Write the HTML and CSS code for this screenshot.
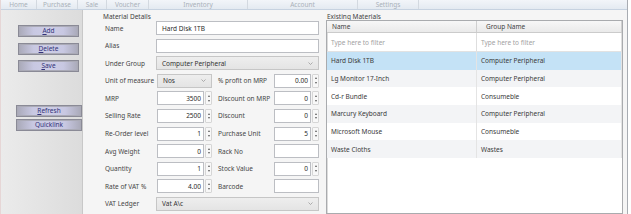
FILE: index.html
```html
<!DOCTYPE html>
<html>
<head>
<meta charset="utf-8">
<title>Material Master</title>
<link rel="stylesheet" href="styles.css">
</head>
<body>
<div class="window">
  <nav class="menubar">
    <span class="menu-item m-home">Home</span>
    <span class="menu-item m-purchase">Purchase</span>
    <span class="menu-item m-sale">Sale</span>
    <span class="menu-item m-voucher">Voucher</span>
    <span class="menu-item m-inventory">Inventory</span>
    <span class="menu-item m-account">Account</span>
    <span class="menu-item m-settings">Settings</span>
  </nav>
  <div class="content">
    <aside class="sidebar">
      <div class="btn-stack">
        <button class="btn"><u>A</u>dd</button>
        <button class="btn"><u>D</u>elete</button>
        <button class="btn"><u>S</u>ave</button>
      </div>
      <div class="btn-stack2">
        <button class="btn btn-wide"><u>R</u>efresh</button>
        <button class="btn btn-wide">Quicklink</button>
      </div>
    </aside>

    <section class="details">
      <div class="group-title">Material Details</div>
      <div class="form">
        <span class="lbl">Name</span>
        <div class="textbox full">Hard Disk 1TB</div>

        <span class="lbl">Alias</span>
        <div class="textbox full"></div>

        <span class="lbl">Under Group</span>
        <div class="combo full"><span>Computer Peripheral</span><svg class="chev" width="5" height="3" viewBox="0 0 5 3"><polyline points="0.5,0.5 2.5,2.5 4.5,0.5" fill="none" stroke="#9a9a9a" stroke-width="0.8"/></svg></div>

        <span class="lbl">Unit of measure</span>
        <div class="combo c1"><span>Nos</span><svg class="chev" width="5" height="3" viewBox="0 0 5 3"><polyline points="0.5,0.5 2.5,2.5 4.5,0.5" fill="none" stroke="#9a9a9a" stroke-width="0.8"/></svg></div>
        <span class="lbl lbl2">% profit on MRP</span>
        <div class="spin c2"><span class="spin-val">0.00</span><span class="spin-btns"><i class="up"></i><i class="down"></i></span></div>

        <span class="lbl">MRP</span>
        <div class="spin c1"><span class="spin-val">3500</span><span class="spin-btns"><i class="up"></i><i class="down"></i></span></div>
        <span class="lbl lbl2">Discount on MRP</span>
        <div class="spin c2"><span class="spin-val">0</span><span class="spin-btns"><i class="up"></i><i class="down"></i></span></div>

        <span class="lbl">Selling Rate</span>
        <div class="spin c1"><span class="spin-val">2500</span><span class="spin-btns"><i class="up"></i><i class="down"></i></span></div>
        <span class="lbl lbl2">Discount</span>
        <div class="spin c2"><span class="spin-val">0</span><span class="spin-btns"><i class="up"></i><i class="down"></i></span></div>

        <span class="lbl">Re-Order level</span>
        <div class="spin c1"><span class="spin-val">1</span><span class="spin-btns"><i class="up"></i><i class="down"></i></span></div>
        <span class="lbl lbl2">Purchase Unit</span>
        <div class="spin c2"><span class="spin-val">5</span><span class="spin-btns"><i class="up"></i><i class="down"></i></span></div>

        <span class="lbl">Avg Weight</span>
        <div class="spin c1"><span class="spin-val">0</span><span class="spin-btns"><i class="up"></i><i class="down"></i></span></div>
        <span class="lbl lbl2">Rack No</span>
        <div class="textbox c2"></div>

        <span class="lbl">Quantity</span>
        <div class="spin c1"><span class="spin-val">1</span><span class="spin-btns"><i class="up"></i><i class="down"></i></span></div>
        <span class="lbl lbl2">Stock Value</span>
        <div class="spin c2"><span class="spin-val">0</span><span class="spin-btns"><i class="up"></i><i class="down"></i></span></div>

        <span class="lbl">Rate of VAT %</span>
        <div class="spin c1"><span class="spin-val">4.00</span><span class="spin-btns"><i class="up"></i><i class="down"></i></span></div>
        <span class="lbl lbl2">Barcode</span>
        <div class="textbox c2"></div>

        <span class="lbl">VAT Ledger</span>
        <div class="combo full"><span>Vat A\c</span><svg class="chev" width="5" height="3" viewBox="0 0 5 3"><polyline points="0.5,0.5 2.5,2.5 4.5,0.5" fill="none" stroke="#9a9a9a" stroke-width="0.8"/></svg></div>
      </div>
    </section>

    <section class="materials">
      <div class="group-title gt-right">Existing Materials</div>
      <div class="grid">
        <div class="grid-head">
          <div class="cell c-name">Name</div>
          <div class="cell c-group head-group">Group Name</div>
        </div>
        <div class="grid-filter">
          <div class="cell c-name ph">Type here to filter</div>
          <div class="cell c-group ph">Type here to filter</div>
        </div>
        <div class="grid-row selected">
          <div class="cell c-name">Hard Disk 1TB</div>
          <div class="cell c-group">Computer Peripheral</div>
        </div>
        <div class="grid-row alt">
          <div class="cell c-name">Lg Monitor 17-Inch</div>
          <div class="cell c-group">Computer Peripheral</div>
        </div>
        <div class="grid-row">
          <div class="cell c-name">Cd-r Bundle</div>
          <div class="cell c-group">Consumeble</div>
        </div>
        <div class="grid-row alt">
          <div class="cell c-name">Marcury Keyboard</div>
          <div class="cell c-group">Computer Peripheral</div>
        </div>
        <div class="grid-row">
          <div class="cell c-name">Microsoft Mouse</div>
          <div class="cell c-group">Consumeble</div>
        </div>
        <div class="grid-row alt">
          <div class="cell c-name">Waste Cloths</div>
          <div class="cell c-group">Wastes</div>
        </div>
      </div>
    </section>
  </div>
</div>
</body>
</html>
```

FILE: styles.css
```css
* { box-sizing: border-box; }

html, body {
  margin: 0;
  padding: 0;
  background: #ffffff;
}

body {
  width: 631px;
  height: 214px;
  overflow: hidden;
  font-family: "Noto Sans", "Open Sans", sans-serif;
  font-size: 6.5px;
  color: #474747;
}

.window {
  width: 628px;
  height: 214px;
  display: flex;
  flex-direction: column;
  border-right: 1px solid #a8acb2;
  border-left: 1px solid #e6d6d6;
  background: #f5f5f5;
}

/* ---------- menu bar ---------- */
.menubar {
  height: 10px;
  flex: none;
  display: flex;
  background: linear-gradient(#f2f5f9, #e4eaf1);
  border-bottom: 1px solid #c6d2e0;
  color: #aab1b9;
  line-height: 7px;
  overflow: hidden;
}

.menu-item {
  display: flex;
  justify-content: center;
  align-items: flex-start;
  padding-top: 1px;
  border-right: 1px solid #d3d9e0;
  height: 9px;
}

.m-home { width: 36px; }
.m-purchase { width: 41px; }
.m-sale { width: 29px; }
.m-voucher { width: 42px; }
.m-inventory { width: 99px; }
.m-account { width: 110px; }
.m-settings { width: 61px; }

/* ---------- layout ---------- */
.content {
  flex: 1;
  display: flex;
  min-height: 0;
}

.sidebar {
  width: 82px;
  flex: none;
  background: linear-gradient(to right, #ebebeb, #dcdcdc);
  border-right: 1px solid #c8c8c8;
  display: flex;
  flex-direction: column;
  padding-top: 15px;
}

.btn-stack {
  display: flex;
  flex-direction: column;
  gap: 5.5px;
  padding-left: 17px;
}

.btn-stack2 {
  display: flex;
  flex-direction: column;
  gap: 2px;
  padding-left: 15px;
  margin-top: 33px;
}

.btn {
  width: 61px;
  height: 12px;
  padding: 0;
  margin: 0;
  font-family: inherit;
  font-size: 6.5px;
  line-height: 10px;
  color: #33337a;
  border: 1px solid #8a8a96;
  box-shadow: inset 0 0 0 1px #aaaab6;
  background: linear-gradient(to right, #a9a9b8 0%, #c8c8e2 25%, #cdcde6 50%, #c8c8e2 75%, #a9a9b8 100%);
}

.btn u { text-decoration-thickness: 0.5px; text-underline-offset: 1px; }

.btn-wide { width: 66px; }

/* ---------- material details ---------- */
.details {
  width: 240px;
  flex: none;
  padding-left: 20px;
}

.group-title {
  height: 11px;
  line-height: 11px;
  padding-top: 1px;
  color: #3f3f3f;
}

.form {
  padding-left: 2px;
  display: grid;
  grid-template-columns: 51px 57px 61px 45px;
  grid-auto-rows: 14px;
  row-gap: 3.6px;
}

.lbl {
  display: flex;
  align-items: center;
  white-space: nowrap;
  color: #464646;
}

.lbl2 { padding-left: 5px; }

.full { grid-column: 2 / 5; }
.c1 { grid-column: 2; margin-right: 1px; margin-left: 1px; }
.c2 { grid-column: 4; }

.textbox {
  background: #ffffff;
  border: 1px solid #bcbec3;
  display: flex;
  align-items: center;
  padding-left: 5px;
  color: #2a2a2a;
}

.combo {
  background: linear-gradient(#eeeeee, #e4e4e4);
  border: 1px solid #c6c6c6;
  display: flex;
  align-items: center;
  justify-content: space-between;
  padding-left: 5px;
  padding-right: 5px;
  color: #333;
}

.chev { flex: none; }

.spin {
  display: flex;
  gap: 1px;
}

.spin-val {
  flex: 1;
  background: #ffffff;
  border: 1px solid #bcbec3;
  display: flex;
  align-items: center;
  justify-content: flex-end;
  padding-right: 2px;
  color: #2a2a2a;
}

.spin-btns {
  width: 7px;
  flex: none;
  display: flex;
  flex-direction: column;
  justify-content: space-evenly;
  align-items: center;
  border: 1px solid #d6d6d6;
  border-radius: 1px;
  background: #f8f8f8;
}

.spin-btns i {
  display: block;
  width: 0;
  height: 0;
  border-left: 1.5px solid transparent;
  border-right: 1.5px solid transparent;
}

.spin-btns .up { border-bottom: 2px solid #5a5a5a; }
.spin-btns .down { border-top: 2px solid #5a5a5a; }

/* ---------- existing materials ---------- */
.materials {
  flex: 1;
  display: flex;
  flex-direction: column;
  padding-left: 3px;
  padding-right: 4px;
}

.gt-right { padding-left: 1px; height: 10px; }

.grid {
  flex: 1;
  background: #ffffff;
  border: 1px solid #a9abae;
  box-shadow: inset 1px 0 0 #dcdcdc;
  display: flex;
  flex-direction: column;
}

.cell {
  display: flex;
  align-items: center;
  white-space: nowrap;
  padding-left: 4px;
  color: #3a3a3a;
}

.grid-head {
  display: flex;
  height: 12px;
  flex: none;
  background: linear-gradient(#f7f7f7, #eaeaea);
  border-bottom: 1px solid #cbcbcb;
}

.grid-head .cell { border-right: 1px solid #cfcfcf; padding-left: 5px; color: #444; }
.grid-head .head-group { padding-left: 9px; }

.grid-filter {
  display: flex;
  height: 19px;
  flex: none;
  border-bottom: 1px solid #e2e2e2;
}

.grid-filter .cell { border-right: 1px solid #dedede; padding-left: 4px; }

.grid-filter .ph { color: #a2a2a2; }

.grid-row {
  display: flex;
  height: 17.7px;
  flex: none;
  background: #ffffff;
}

.grid-row.alt { background: #f3f4f6; }
.grid-row.selected { background: #c4e2f6; }

.grid-row .cell { border-right: 1px solid #e4e4e4; }

.c-name { width: 150px; flex: none; }
.c-group { flex: 1; }
```
